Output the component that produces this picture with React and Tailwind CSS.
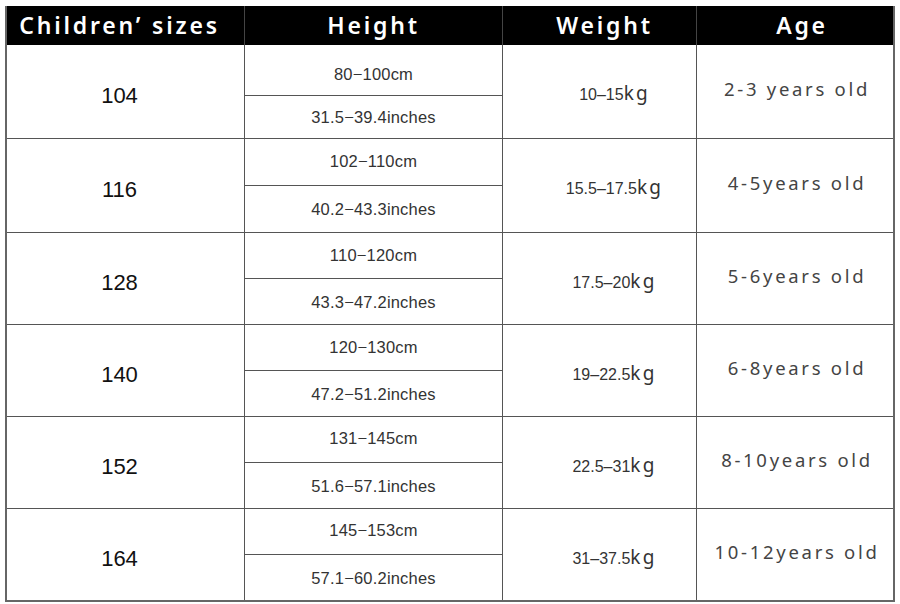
import React from "react";

const rows = [
  { size: "104", cm: "80−100cm", inch: "31.5−39.4inches", w: "10–15", age: "2-3 years old", h: 94, top: "pt-[9px]" },
  { size: "116", cm: "102−110cm", inch: "40.2−43.3inches", w: "15.5–17.5", age: "4-5years old", h: 94, top: "pb-[1px]" },
  { size: "128", cm: "110−120cm", inch: "43.3−47.2inches", w: "17.5–20", age: "5-6years old", h: 92, top: "pt-[1px]" },
  { size: "140", cm: "120−130cm", inch: "47.2−51.2inches", w: "19–22.5", age: "6-8years old", h: 92, top: "pt-[1px]" },
  { size: "152", cm: "131−145cm", inch: "51.6−57.1inches", w: "22.5–31", age: "8-10years old", h: 92, top: "pb-[1px]" },
  { size: "164", cm: "145−153cm", inch: "57.1−60.2inches", w: "31–37.5", age: "10-12years old", h: 91, top: "pb-[1px]" },
];

const hdr = "flex items-center justify-center text-white font-semibold text-[23px] tracking-[2.8px] [font-family:'Noto_Sans',sans-serif]";

export default function App() {
  return (
    <div className="w-[900px] h-[604px] bg-white pt-[6px] pl-[5px]">
      <div className="w-[890px] border-x-2 border-b-2 border-[#666]">
        <div className="flex h-[39px] bg-black">
          <div className={`${hdr} w-[238px] border-r border-[#444] pr-[12px]`}>Children’ sizes</div>
          <div className={`${hdr} w-[258px] border-r border-[#444]`}>Height</div>
          <div className={`${hdr} w-[194px] border-r border-[#444] pl-[10px]`}>Weight</div>
          <div className={`${hdr} flex-1 pl-[14px]`}>Age</div>
        </div>
        {rows.map((r, i) => (
          <div
            key={r.size}
            className={`flex ${i < rows.length - 1 ? "border-b border-[#555]" : ""}`}
            style={{ height: r.h }}
          >
            <div className="w-[238px] border-r border-[#555] flex items-center justify-center pt-[8px] pr-[12px] text-[22px] text-[#111] [font-family:'Liberation_Sans',Arial,sans-serif]">
              {r.size}
            </div>
            <div className="w-[258px] border-r border-[#555] flex flex-col text-[16.5px] text-[#333] tracking-[0.2px] [font-family:'Liberation_Sans',Arial,sans-serif]">
              <div className={`flex-1 flex items-center justify-center border-b border-[#555] ${r.top}`}>{r.cm}</div>
              <div className="flex-1 flex items-center justify-center pt-[2px]">{r.inch}</div>
            </div>
            <div className="w-[194px] border-r border-[#555] flex items-baseline justify-center pl-[30px] pt-[34px] text-[#333]">
              <span className="text-[16px] [font-family:'Liberation_Sans',Arial,sans-serif]">{r.w}</span>
              <span className="text-[19px] tracking-[2.2px] [font-family:'Noto_Sans',sans-serif]">kg</span>
            </div>
            <div className="flex-1 flex items-center justify-center pb-[5px] pl-[4px] text-[18.5px] tracking-[2.7px] text-[#444] [font-family:'Noto_Sans',sans-serif]">
              {r.age}
            </div>
          </div>
        ))}
      </div>
    </div>
  );
}
